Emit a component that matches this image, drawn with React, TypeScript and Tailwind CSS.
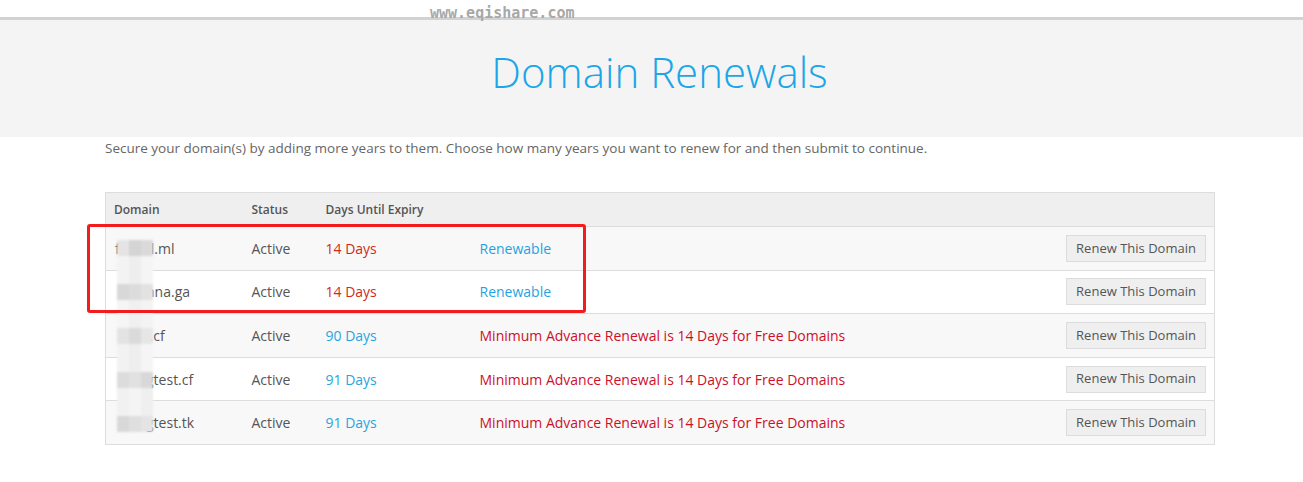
import React from 'react';

const rows = [
  { pre: 'f', post: 'l.ml', days: '14 Days', soon: true },
  { pre: '', post: 'nna.ga', days: '14 Days', soon: true },
  { pre: '', post: 'l.cf', days: '90 Days', soon: false },
  { pre: '', post: 'gtest.cf', days: '91 Days', soon: false },
  { pre: '', post: 'gtest.tk', days: '91 Days', soon: false },
];

// pixelated blur used to hide domain names: a darker band over the text, lighter between
const mosaic = [
  { h: 'h-[16px]', c: ['#e4e4e4', '#d4d4d4', '#dadada'] },
  { h: 'h-[28px]', c: ['#f3f3f3', '#eeeeee', '#f5f5f5'] },
  { h: 'h-[16px]', c: ['#d8d8d8', '#dcdcdc', '#e2e2e2'] },
  { h: 'h-[28px]', c: ['#f5f5f5', '#f0f0f0', '#f3f3f3'] },
  { h: 'h-[16px]', c: ['#e3e3e3', '#dadada', '#e6e6e6'] },
  { h: 'h-[28px]', c: ['#f2f2f2', '#eeeeee', '#f5f5f5'] },
  { h: 'h-[16px]', c: ['#dcdcdc', '#e1e1e1', '#d8d8d8'] },
  { h: 'h-[28px]', c: ['#f1f1f1', '#f4f4f4', '#efefef'] },
  { h: 'h-[16px]', c: ['#d8d8d8', '#dfdfdf', '#e4e4e4'] },
];

export default function App() {
  return (
    <div className="relative min-h-[482px] bg-white font-['Open_Sans',sans-serif] text-[#555]">
      <div className="h-[17px] pl-[430px]">
        <span className="text-[15px] leading-[17px] font-bold text-[#a8a8a8] font-['DejaVu_Sans_Mono',monospace]">www.eqishare.com</span>
      </div>
      <div className="h-[3px] bg-[#d2d2d2]"></div>
      <div className="h-[117px] bg-[#f4f4f4] flex justify-center pt-[28px] pl-[16px]">
        <h1 className="text-[42px] leading-[48px] font-light text-[#1aa6e8]">Domain Renewals</h1>
      </div>

      <div className="ml-[105px] w-[1110px]">
        <p className="mt-[1px] text-[13.5px] leading-[20px] text-[#666]">
          Secure your domain(s) by adding more years to them. Choose how many years you want to renew for and then submit to continue.
        </p>

        <table className="mt-[34px] w-full border-collapse border border-[#ddd] text-[14px]">
          <thead>
            <tr className="h-[34px] bg-[#efefef] text-left text-[12px] font-semibold text-[#555]">
              <th className="w-[137px] pl-[8px] font-semibold">Domain</th>
              <th className="w-[75px] pl-[9px] font-semibold">Status</th>
              <th className="w-[154px] pl-[8px] font-semibold">Days Until Expiry</th>
              <th></th>
              <th></th>
            </tr>
          </thead>
          <tbody>
            {rows.map((r, i) => (
              <tr key={i} className={`h-[43.6px] border-t border-[#ddd] ${i % 2 === 0 ? 'bg-[#f8f8f8]' : 'bg-white'}`}>
                <td className="pl-[9px] text-[#555]">
                  {r.pre}
                  <span className="inline-block w-[31px] h-[14px] align-middle"></span>
                  {r.post}
                </td>
                <td className="pl-[9px]">Active</td>
                <td className={`pl-[8px] ${r.soon ? 'text-[#d12a1a]' : 'text-[#2aa4e0]'}`}>{r.days}</td>
                <td className="pl-[8px]">
                  {r.soon ? (
                    <span className="text-[#1fa3e3]">Renewable</span>
                  ) : (
                    <span className="text-[#cc0f2a]">Minimum Advance Renewal is 14 Days for Free Domains</span>
                  )}
                </td>
                <td className="pr-[8px] text-right">
                  <button className="h-[27px] w-[140px] border border-[#dcdcdc] bg-[#efefef] text-[13px] text-[#555]">
                    Renew This Domain
                  </button>
                </td>
              </tr>
            ))}
          </tbody>
        </table>
      </div>

      {/* blurred-out domain names */}
      <div className="absolute left-[117px] top-[240px] flex flex-col blur-[1px]">
        {mosaic.map((band, i) => (
          <div key={i} className="flex">
            {band.c.map((c, j) => (
              <div key={j} className={`${band.h} w-[12px]`} style={{ backgroundColor: c }}></div>
            ))}
          </div>
        ))}
      </div>

      {/* red annotation box */}
      <div className="absolute left-[87px] top-[224px] h-[89px] w-[499px] rounded-[3px] border-[3px] border-[#f21c1c]"></div>
    </div>
  );
}
